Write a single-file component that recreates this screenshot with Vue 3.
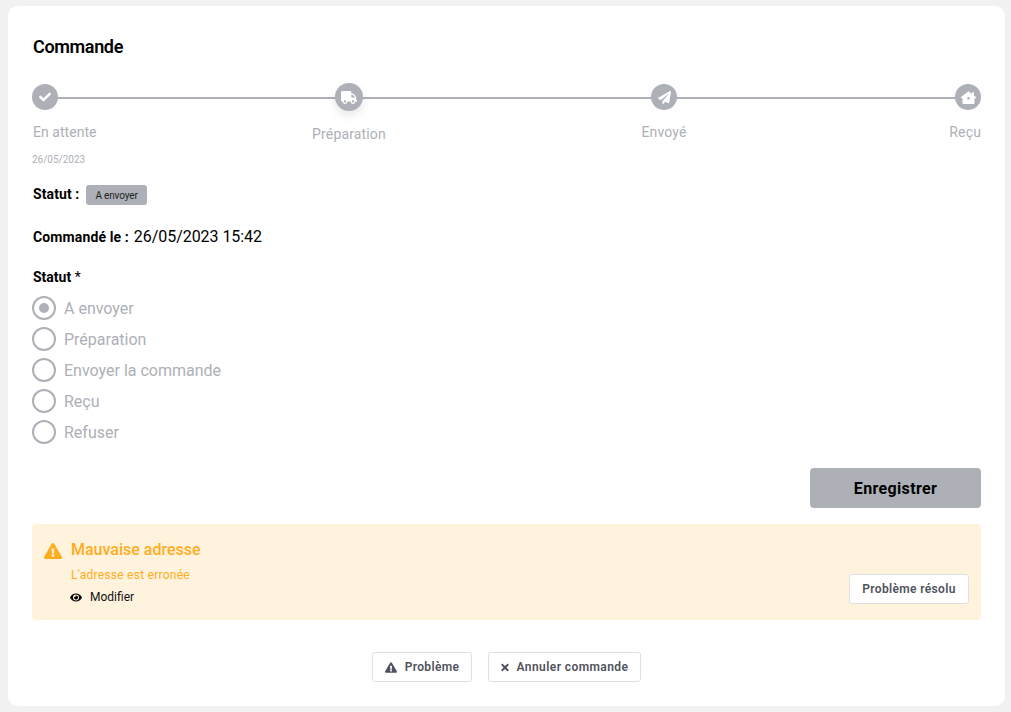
<script setup>
const steps = [
  { label: 'En attente', cls: 'first', icon: 'check', date: '26/05/2023' },
  { label: 'Préparation', cls: 'mid active', icon: 'truck' },
  { label: 'Envoyé', cls: 'mid', icon: 'plane' },
  { label: 'Reçu', cls: 'last', icon: 'home' }
]
const options = ['A envoyer', 'Préparation', 'Envoyer la commande', 'Reçu', 'Refuser']
</script>

<template>
  <div class="page">
    <main class="card">
      <h1 class="title">Commande</h1>

      <div class="stepper">
        <div class="line"></div>
        <div v-for="s in steps" :key="s.label" class="step" :class="s.cls">
          <div class="dot">
            <svg v-if="s.icon === 'check'" class="i-check" viewBox="0 0 512 512"><path d="M173.898 439.404l-166.4-166.4c-9.997-9.997-9.997-26.206 0-36.204l36.203-36.204c9.997-9.998 26.207-9.998 36.204 0L192 312.69 432.095 72.596c9.997-9.997 26.207-9.997 36.204 0l36.203 36.204c9.997 9.997 9.997 26.206 0 36.204l-294.4 294.401c-9.998 9.997-26.207 9.997-36.204-.001z"/></svg>
            <svg v-else-if="s.icon === 'truck'" class="i-truck" viewBox="0 0 640 512"><path d="M624 352h-16V243.9c0-12.7-5.1-24.9-14.1-33.9L494 110.1c-9-9-21.2-14.1-33.9-14.1H416V48c0-26.5-21.5-48-48-48H48C21.5 0 0 21.5 0 48v320c0 26.5 21.5 48 48 48h16c0 53 43 96 96 96s96-43 96-96h128c0 53 43 96 96 96s96-43 96-96h48c8.8 0 16-7.2 16-16v-32c0-8.8-7.2-16-16-16zM160 464c-26.5 0-48-21.5-48-48s21.5-48 48-48 48 21.5 48 48-21.5 48-48 48zm320 0c-26.5 0-48-21.5-48-48s21.5-48 48-48 48 21.5 48 48-21.5 48-48 48zm80-208H416V144h44.1l99.9 99.9V256z"/></svg>
            <svg v-else-if="s.icon === 'plane'" class="i-plane" viewBox="0 0 512 512"><path d="M476 3.2L12.5 270.6c-18.1 10.4-15.8 35.6 2.2 43.2L121 358.4l287.3-253.2c5.5-4.9 13.3 2.6 8.6 8.3L176 407v80.5c0 23.6 28.5 32.9 42.5 15.8L282 426l124.6 52.2c14.2 6 30.4-2.9 33-18.2l72-432C515 7.8 493.3-6.8 476 3.2z"/></svg>
            <svg v-else class="i-home" viewBox="0 0 24 24"><path fill-rule="evenodd" d="M12 3.2l5 3.9V4.6h2.6v4.5L23 11.8l-1.3 1.6-1.2-.9v7.2c0 .7-.6 1.3-1.3 1.3H4.8c-.7 0-1.3-.6-1.3-1.3v-7.2l-1.2.9L1 11.8 12 3.2zM12 11.2a1.9 1.9 0 1 0 0 3.8 1.9 1.9 0 0 0 0-3.8z"/></svg>
          </div>
          <div class="step-label">{{ s.label }}</div>
          <div v-if="s.date" class="step-date">{{ s.date }}</div>
        </div>
      </div>

      <div class="status-row">
        <strong>Statut :</strong>
        <span class="badge">A envoyer</span>
      </div>

      <div class="ordered">
        <strong>Commandé le :</strong>
        <span class="ordered-value">26/05/2023 15:42</span>
      </div>

      <div class="field-label"><strong>Statut</strong> *</div>
      <div class="radios">
        <label v-for="(o, i) in options" :key="o" class="radio">
          <span class="ring" :class="{ on: i === 0 }"></span>
          <span>{{ o }}</span>
        </label>
      </div>

      <div class="save-row">
        <button class="save" type="button">Enregistrer</button>
      </div>

      <section class="alert">
        <svg class="alert-icon" viewBox="0 0 576 512"><path d="M569.517 440.013C587.975 472.007 564.806 512 527.94 512H48.054c-36.937 0-59.999-40.055-41.577-71.987L246.423 23.985c18.467-32.009 64.72-31.951 83.154 0l239.94 416.028zM288 354c-25.405 0-46 20.595-46 46s20.595 46 46 46 46-20.595 46-46-20.595-46-46-46zm-43.673-165.346l7.418 136c.347 6.364 5.609 11.346 11.982 11.346h48.546c6.373 0 11.635-4.982 11.982-11.346l7.418-136c.375-6.874-5.098-12.654-11.982-12.654h-63.383c-6.884 0-12.356 5.78-11.981 12.654z"/></svg>
        <div class="alert-body">
          <div class="alert-title">Mauvaise adresse</div>
          <div class="alert-text">L'adresse est erronée</div>
          <div class="alert-link">
            <svg class="eye" viewBox="0 0 576 512"><path d="M572.52 241.4C518.29 135.59 410.93 64 288 64S57.68 135.64 3.48 241.41a32.35 32.35 0 0 0 0 29.19C57.71 376.41 165.07 448 288 448s230.32-71.64 284.52-177.41a32.35 32.35 0 0 0 0-29.19zM288 400a144 144 0 1 1 144-144 143.93 143.93 0 0 1-144 144zm0-240a95.31 95.31 0 0 0-25.31 3.79 47.85 47.85 0 0 1-66.9 66.9A95.78 95.78 0 1 0 288 160z"/></svg>
            <span>Modifier</span>
          </div>
        </div>
        <button class="btn resolved" type="button">Problème résolu</button>
      </section>

      <div class="actions">
        <button class="btn action" type="button">
          <svg class="a-warn" viewBox="0 0 576 512"><path d="M569.517 440.013C587.975 472.007 564.806 512 527.94 512H48.054c-36.937 0-59.999-40.055-41.577-71.987L246.423 23.985c18.467-32.009 64.72-31.951 83.154 0l239.94 416.028zM288 354c-25.405 0-46 20.595-46 46s20.595 46 46 46 46-20.595 46-46-20.595-46-46-46zm-43.673-165.346l7.418 136c.347 6.364 5.609 11.346 11.982 11.346h48.546c6.373 0 11.635-4.982 11.982-11.346l7.418-136c.375-6.874-5.098-12.654-11.982-12.654h-63.383c-6.884 0-12.356 5.78-11.981 12.654z"/></svg>
          Problème
        </button>
        <button class="btn action" type="button">
          <svg class="a-times" viewBox="0 0 352 512"><path d="M242.72 256l100.07-100.07c12.28-12.28 12.28-32.19 0-44.48l-22.24-22.24c-12.28-12.28-32.19-12.28-44.48 0L176 189.28 75.93 89.21c-12.28-12.28-32.19-12.28-44.48 0L9.21 111.45c-12.28 12.28-12.28 32.19 0 44.48L109.28 256 9.21 356.07c-12.28 12.28-12.28 32.19 0 44.48l22.24 22.24c12.28 12.28 32.2 12.28 44.48 0L176 322.72l100.07 100.07c12.28 12.28 32.2 12.28 44.48 0l22.24-22.24c12.28-12.28 12.28-32.19 0-44.48L242.72 256z"/></svg>
          Annuler commande
        </button>
      </div>
    </main>
  </div>
</template>

<style scoped>
.page {
  width: 1011px;
  height: 712px;
  box-sizing: border-box;
  padding: 6px 6px 6px 8px;
  background: #f1f1f1;
  font-family: Roboto, "Liberation Sans", sans-serif;
  color: #000;
  overflow: hidden;
}
.card {
  height: 700px;
  box-sizing: border-box;
  padding: 31px 24px 0;
  background: #fff;
  border-radius: 10px;
}
.title {
  margin: 0 0 0 1px;
  font-size: 18px;
  line-height: 20px;
  font-weight: 600;
  letter-spacing: -0.35px;
}
.stepper {
  position: relative;
  margin-top: 27px;
  display: grid;
  grid-template-columns: 65px 215px 74px 255px 46px 262px 32px;
  height: 90px;
}
.line {
  position: absolute;
  left: 13px;
  right: 13px;
  top: 13px;
  height: 2px;
  background: #adb0b7;
}
.step {
  position: relative;
  display: flex;
  flex-direction: column;
  align-items: center;
  font-size: 14px;
  letter-spacing: 0.15px;
  color: #adb0b7;
}
.step:nth-child(2) { grid-column: 1; align-items: flex-start; }
.step:nth-child(3) { grid-column: 3; }
.step:nth-child(4) { grid-column: 5; }
.step:nth-child(5) { grid-column: 7; align-items: flex-end; }
.dot {
  width: 26px;
  height: 26px;
  border-radius: 50%;
  background: #adb0b7;
  display: flex;
  align-items: center;
  justify-content: center;
  fill: #fff;
  flex: none;
}
.active { margin-top: -1px; }
.active .dot {
  width: 28px;
  height: 28px;
  box-shadow: 0 4px 10px rgba(0, 0, 0, 0.1);
}
.step-label {
  margin-top: 14px;
  line-height: 17px;
  white-space: nowrap;
}
.active .step-label { margin-top: 15px; }
.first .step-label {
  margin-left: 1px;
  letter-spacing: 0.05px;
}
.step-date {
  margin-top: 13px;
  font-size: 10px;
  line-height: 12px;
  letter-spacing: 0;
}
.i-check { width: 12px; height: 12px; }
.i-truck { width: 16px; height: 13px; }
.i-plane { width: 13px; height: 13px; }
.i-home { width: 17px; height: 17px; }
.status-row {
  margin-top: 11px;
  padding-left: 1px;
  display: flex;
  align-items: center;
  gap: 6px;
  height: 20px;
  font-size: 14px;
}
.status-row strong {
  min-width: 47px;
  margin-top: -2px;
  letter-spacing: 0.1px;
}
.badge {
  display: inline-flex;
  align-items: center;
  justify-content: center;
  width: 61px;
  height: 20px;
  border-radius: 3px;
  background: #adb0b7;
  font-size: 10px;
  letter-spacing: -0.15px;
  color: #222;
}
.ordered {
  margin-top: 22px;
  padding-left: 1px;
  display: flex;
  align-items: baseline;
  gap: 5px;
  height: 21px;
  font-size: 14px;
}
.ordered strong { letter-spacing: 0.12px; }
.ordered-value { font-size: 16px; letter-spacing: -0.05px; }
.field-label {
  margin-top: 19px;
  padding-left: 1px;
  font-size: 14px;
  line-height: 20px;
}
.radios {
  margin-top: 9px;
  display: flex;
  flex-direction: column;
  gap: 7px;
}
.radio {
  display: flex;
  align-items: center;
  gap: 8px;
  height: 24px;
  font-size: 16px;
  color: #adb0b7;
}
.ring {
  width: 24px;
  height: 24px;
  box-sizing: border-box;
  border: 2px solid #adb0b7;
  border-radius: 50%;
  display: flex;
  align-items: center;
  justify-content: center;
}
.ring.on::after {
  content: "";
  width: 10px;
  height: 10px;
  border-radius: 50%;
  background: #adb0b7;
}
.save-row {
  margin-top: 24px;
  display: flex;
  justify-content: flex-end;
}
.save {
  width: 171px;
  height: 40px;
  border: 0;
  border-radius: 4px;
  background: #adb0b7;
  color: #000;
  font: 700 16px Roboto, "Liberation Sans", sans-serif;
  letter-spacing: 0.35px;
}
.alert {
  margin-top: 16px;
  height: 96px;
  box-sizing: border-box;
  padding: 16px 12px 16px;
  display: flex;
  align-items: flex-start;
  background: #fff3dd;
  border-radius: 4px;
}
.alert-icon {
  width: 18px;
  height: 16px;
  margin-top: 3px;
  fill: #ffad1f;
  flex: none;
}
.alert-body {
  flex: 1;
  margin-left: 9px;
}
.alert-title {
  font-size: 16px;
  font-weight: 500;
  line-height: 20px;
  color: #ffad1f;
}
.alert-text {
  margin-top: 7px;
  font-size: 12px;
  line-height: 16px;
  letter-spacing: 0.25px;
  color: #ffad1f;
}
.alert-link {
  margin-top: 6px;
  margin-left: -1px;
  display: flex;
  align-items: center;
  gap: 8px;
  font-size: 12px;
  line-height: 16px;
  color: #111;
}
.eye { width: 12px; height: 11px; fill: #000; }
.btn {
  box-sizing: border-box;
  height: 30px;
  background: #fff;
  border: 1px solid #e0e0e3;
  border-radius: 3px;
  color: #50535c;
  font: 600 12px Roboto, "Liberation Sans", sans-serif;
  letter-spacing: 0.35px;
  display: inline-flex;
  align-items: center;
  justify-content: center;
  padding: 0;
}
.resolved {
  width: 120px;
  margin-top: 34px;
}
.actions {
  margin-top: 32px;
  display: flex;
  justify-content: center;
  gap: 16px;
}
.action { fill: #50535c; gap: 8px; }
.action:first-child { width: 100px; }
.action:last-child {
  width: 153px;
  letter-spacing: 0.42px;
}
.a-warn { width: 12px; height: 11px; }
.a-times { width: 8px; height: 11px; }
</style>

<style>
html, body { margin: 0; background: #f1f1f1; }
</style>
